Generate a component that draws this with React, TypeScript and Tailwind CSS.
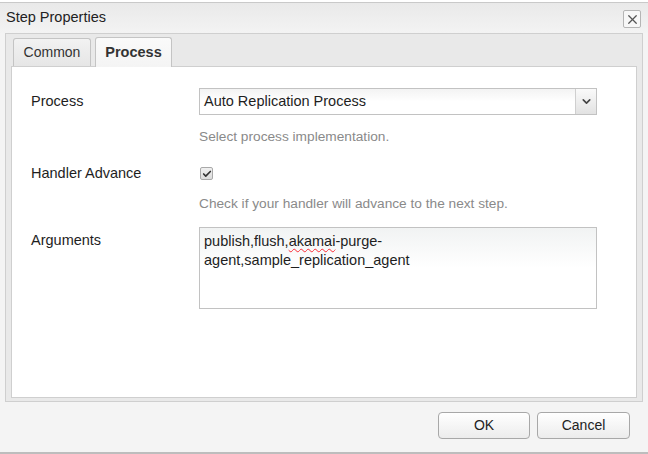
import { ChevronDown, Check, X } from 'lucide-react';

function Row({
  label,
  labelClass,
  children,
  help,
}: {
  label: string;
  labelClass: string;
  children: React.ReactNode;
  help?: string;
}) {
  return (
    <div className="flex">
      <div className={`w-[168px] shrink-0 text-[14.5px] text-[#1e1e1e] ${labelClass}`}>{label}</div>
      <div className="flex flex-col">
        {children}
        {help && <p className="mt-[14px] text-[13.7px] leading-[16px] text-[#8a8a8a]">{help}</p>}
      </div>
    </div>
  );
}

export default function App() {
  return (
    <div className="w-[648px] h-[454px] overflow-hidden bg-white font-['Liberation_Sans',Arial,sans-serif] text-[#222]">
      <div className="h-[2px] bg-white" />
      <div className="h-[452px] flex flex-col border-t border-[#c9c9c9] border-b-2 border-b-[#bdbdbd] bg-[#f4f4f4]">
        {/* title bar */}
        <div className="h-[30px] shrink-0 flex items-center justify-between pl-[6px] pr-[7px] bg-gradient-to-b from-[#e9e9e9] to-[#f3f3f3]">
          <span className="text-[14.5px] text-[#222]">Step Properties</span>
          <button className="w-[18px] h-[18px] mt-[2px] flex items-center justify-center border border-[#b5b5b5] rounded-[2px] bg-[#f7f7f7]">
            <X className="w-[15px] h-[15px] text-[#555]" strokeWidth={2} />
          </button>
        </div>

        {/* tab panel */}
        <div className="mx-[5px] h-[369px] shrink-0 flex flex-col border border-[#cfcfcf] bg-[#e9e9e9] px-[5px] pb-[3px]">
          <div className="h-[32px] shrink-0 flex items-end gap-[4px] pl-[2px]">
            <div className="w-[78px] h-[28px] flex items-center justify-center border border-b-0 border-[#c4c4c4] rounded-t-[3px] bg-gradient-to-b from-[#f2f2f2] to-[#e6e6e6] text-[14px] text-[#333]">
              Common
            </div>
            <div className="relative z-10 -mb-px w-[77px] h-[30px] flex items-center justify-center border border-b-0 border-[#c4c4c4] rounded-t-[3px] bg-gradient-to-b from-[#fafafa] to-[#f4f4f4] text-[14.5px] font-bold text-[#333]">
              Process
            </div>
          </div>
          <div className="flex-1 border border-[#cfcfcf] bg-white pl-[19px] pt-[21px] flex flex-col">
            <Row label="Process" labelClass="leading-[27px]" help="Select process implementation.">
              <div className="w-[398px] h-[27px] flex border border-[#c2c2c2] bg-gradient-to-b from-[#f3f3f3] via-white to-white">
                <span className="flex-1 pl-[4px] leading-[25px] text-[14.5px] text-[#1e1e1e]">Auto Replication Process</span>
                <div className="w-[21px] flex items-center justify-center border-l border-[#cfcfcf] bg-gradient-to-b from-[#fafafa] to-[#e2e2e2]">
                  <ChevronDown className="w-[13px] h-[13px] text-[#444]" strokeWidth={3} />
                </div>
              </div>
            </Row>
            <div className="mt-[20px]">
              <Row
                label="Handler Advance"
                labelClass="leading-[17px]"
                help="Check if your handler will advance to the next step."
              >
                <div className="h-[17px] flex items-center pl-[1px]">
                  <div className="w-[13px] h-[13px] flex items-center justify-center border border-[#a9a9a9] rounded-[2px] bg-gradient-to-b from-[#f0f0f0] to-[#dcdcdc]">
                    <Check className="w-[10px] h-[10px] text-[#333]" strokeWidth={4} />
                  </div>
                </div>
              </Row>
            </div>
            <div className="mt-[15px]">
              <Row label="Arguments" labelClass="pt-[4px] leading-[19px]">
                <div className="w-[398px] h-[82px] border border-[#c2c2c2] bg-gradient-to-b from-[#f1f3f3] via-white to-white pl-[4px] pt-[4px] text-[14.5px] leading-[19px] text-[#1e1e1e]">
                  publish,flush,<span className="underline decoration-wavy decoration-red-500 decoration-1 underline-offset-2">akamai</span>-purge-
                  <br />
                  agent,sample_replication_agent
                </div>
              </Row>
            </div>
          </div>
        </div>

        {/* footer */}
        <div className="flex-1 flex justify-end items-start gap-[7px] pr-[18px] pt-[10px]">
          <button className="w-[92px] h-[27px] rounded-[4px] border border-[#a8a8a8] bg-gradient-to-b from-white to-[#ececec] text-[14px] text-[#222]">
            OK
          </button>
          <button className="w-[93px] h-[27px] rounded-[4px] border border-[#a8a8a8] bg-gradient-to-b from-white to-[#ececec] text-[14px] text-[#222]">
            Cancel
          </button>
        </div>
      </div>
    </div>
  );
}
